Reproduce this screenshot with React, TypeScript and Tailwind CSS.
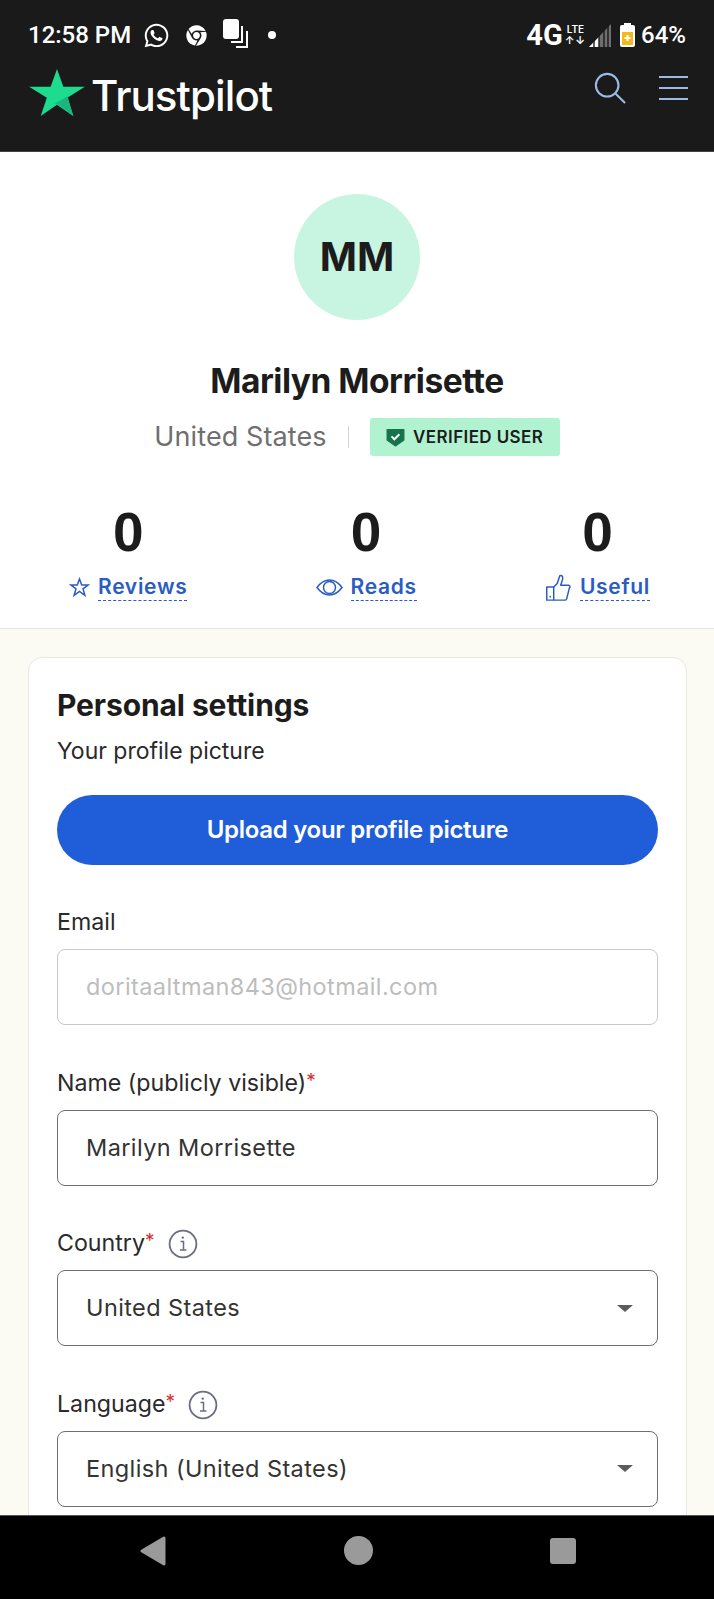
import { FaChrome, FaWhatsapp } from "react-icons/fa";

const Field = ({ label, required, info, value, muted, select, className }: { label: string; required?: boolean; info?: boolean; value: string; muted?: boolean; select?: boolean; className: string }) => {
  return (
    <div className={className}>
      <div className="flex items-center h-[26px] text-[23.2px] text-[#2a2a2a] leading-none">
        <span>{label}</span>
        {required && <span className="text-[#d32f2f] text-[19px] self-start">*</span>}
        {info && (
          <svg className="ml-[13px]" width="30" height="30" viewBox="0 0 30 30" fill="none" stroke="#6a6d80" strokeWidth="1.8">
            <circle cx="15" cy="15" r="13.4" />
            <path d="M12.5 12.6h3v8M12 21h6.4" strokeWidth="1.5" />
            <circle cx="14.8" cy="8.6" r="1.2" fill="#6a6d80" stroke="none" />
          </svg>
        )}
      </div>
      <div className={`mt-[13px] h-[76px] rounded-[8px] border flex items-center justify-between pl-[28px] pr-[24px] text-[23.5px] tracking-[0.4px] ${muted ? "border-[#c9c9c9] text-[#bdbdbd]" : "border-[#6f6f6f] text-[#333]"}`}>
        <span>{value}</span>
        {select && <span className="w-0 h-0 border-x-[8px] border-x-transparent border-t-[7px] border-t-[#5c5c5c]" />}
      </div>
    </div>
  );
};

const Stat = ({ icon, label }: { icon: React.ReactNode; label: string }) => {
  return (
    <div className="flex flex-col items-center">
      <div className="text-[55px] font-bold leading-none text-[#1c1c1c] font-['Liberation_Sans',sans-serif]">0</div>
      <div className="mt-[14px] h-[27px] flex items-center gap-[8px]">
        {icon}
        <span className="text-[21px] font-semibold tracking-[0.7px] leading-[26px] text-[#2a5cc4] border-b border-dashed border-[#2a5cc4]">{label}</span>
      </div>
    </div>
  );
};

export default function App() {
  return (
    <div className="w-[714px] h-[1599px] flex flex-col overflow-hidden bg-white font-['Inter',sans-serif]">
      {/* app bar with the phone status line */}
      <header className="h-[152px] shrink-0 bg-[#1a1a1a] text-white border-b border-[#444] px-[28px] pt-[20px]">
        <div className="flex items-center justify-between h-[30px]">
          <div className="flex items-center">
            <span className="text-[24px] font-medium font-['Roboto',sans-serif] leading-none">12:58 PM</span>
            <FaWhatsapp className="ml-[12px]" size={27} />
            <FaChrome className="ml-[16px]" size={21} />
            <svg className="ml-[14px] -mt-[3px]" width="28" height="32" viewBox="0 0 28 32" fill="#fff">
              <rect x="2" y="1" width="16" height="20" rx="3" />
              <path d="M20 8v15h-10v2h12V8zM25 13v15h-10v2h12V13z" />
            </svg>
            <span className="ml-[19px] w-[8px] h-[8px] rounded-full bg-white" />
          </div>
          <div className="flex items-center">
            <span className="text-[29px] font-bold font-['Roboto',sans-serif] leading-none">4G</span>
            <div className="ml-[2px] flex flex-col items-center">
              <span className="text-[10px] font-semibold leading-[11px]">LTE</span>
              <span className="text-[11px] font-semibold leading-[11px] tracking-[1px]">↑↓</span>
            </div>
            <svg className="ml-[2px]" width="24" height="24" viewBox="0 0 24 24">
              <path d="M1 24L23 1v23z" fill="#6e6e6e" />
              <path d="M1 24l10-10v10z" fill="#fff" />
              <path d="M6 8v16M11 8v16M16 0v24M20 0v24" stroke="#1a1a1a" strokeWidth="1.4" />
            </svg>
            <svg className="ml-[8px]" width="15" height="24" viewBox="0 0 15 24">
              <rect x="4" y="0" width="7" height="3" fill="#fff" />
              <rect x="0" y="2" width="15" height="22" rx="2" fill="#fff" />
              <rect x="2" y="9" width="11" height="13" fill="#f5b81c" />
              <path d="M6.5 12h2v2h2v2h-2v2h-2v-2h-2v-2h2z" fill="#fff" />
            </svg>
            <span className="ml-[6px] text-[24px] font-medium font-['Roboto',sans-serif] leading-none">64%</span>
          </div>
        </div>
        <div className="mt-[17px] flex items-start justify-between">
          <div className="flex items-center">
            <svg width="58" height="47" viewBox="0 0 58 49">
              <path d="M29 0l6.6 18.6H58L39.8 30 46 49 29 37.2 12 49l6.4-19L0 18.6h22.4z" fill="#1ddb8f" />
              <path d="M27 36l13-7.5L46 49 29 37.2z" fill="#19b67f" />
            </svg>
            <span className="ml-[5px] mt-[8px] text-[42px] font-medium tracking-[-0.9px] leading-none">Trustpilot</span>
          </div>
          <div className="flex items-center mt-[5px] text-[#9db9e6]">
            <svg className="mr-[1px]" width="32" height="32" viewBox="0 0 34 34" fill="none" stroke="currentColor" strokeWidth="2.2">
              <circle cx="14" cy="14" r="12" />
              <path d="M23 23l10 10" />
            </svg>
            <div className="ml-[32px] mr-[-2px] w-[29px] flex flex-col gap-[9px]">
              <span className="h-[2px] bg-[#9db9e6]" />
              <span className="h-[2px] bg-[#9db9e6]" />
              <span className="h-[2px] bg-[#9db9e6]" />
            </div>
          </div>
        </div>
      </header>

      <main className="flex-1 min-h-0 overflow-hidden bg-[#fbfaf3]">
        {/* profile block */}
        <section className="h-[477px] bg-white border-b border-[#e6e6e2] flex flex-col items-center pt-[42px]">
          <div className="w-[126px] h-[126px] rounded-full bg-[#c8f5e2] flex items-center justify-center text-[40px] font-bold text-[#1c1c1c]">MM</div>
          <h1 className="mt-[41px] text-[33.5px] font-bold tracking-[-0.5px] leading-[40px] text-[#1c1c1c]">Marilyn Morrisette</h1>
          <div className="mt-[16px] flex items-center">
            <span className="text-[27px] text-[#6f6f6f] tracking-[0.1px]">United States</span>
            <span className="ml-[21px] w-px h-[22px] bg-[#d5d5d5]" />
            <div className="ml-[21px] w-[190px] h-[38px] rounded-[3px] bg-[#b1f3d0] flex items-center justify-center gap-[8px]">
              <svg width="19" height="19" viewBox="0 0 18 18">
                <path d="M1 1.5h16v10L9 17l-8-5.5z" fill="#17734b" stroke="#17734b" strokeLinejoin="round" />
                <path d="M5.2 8l2.7 2.7 4.8-4.8" fill="none" stroke="#fff" strokeWidth="1.8" />
              </svg>
              <span className="text-[17px] font-semibold tracking-[0.4px] text-[#1c1c1c] whitespace-nowrap">VERIFIED USER</span>
            </div>
          </div>
          <div className="mt-[47px] self-stretch flex justify-between pl-[69px] pr-[64px]">
            <Stat
              label="Reviews"
              icon={
                <svg width="21" height="21" viewBox="0 0 21 21" fill="none" stroke="#2a5cc4" strokeWidth="1.5">
                  <path d="M10.5 2l2.2 6h6.3l-5 3.8 1.9 6.5-5.4-3.9-5.4 3.9 1.9-6.5L2 8h6.3z" />
                </svg>
              }
            />
            <Stat
              label="Reads"
              icon={
                <svg width="27" height="21" viewBox="0 0 27 21" fill="none" stroke="#2a5cc4" strokeWidth="1.5">
                  <path d="M1 10.5C5 5 9 3 13.5 3S22 5 26 10.5C22 16 18 18 13.5 18S5 16 1 10.5z" />
                  <circle cx="13.5" cy="10.5" r="6" />
                </svg>
              }
            />
            <Stat
              label="Useful"
              icon={
                <svg width="27" height="27" viewBox="0 0 29 31" fill="none" stroke="#2a5cc4" strokeWidth="1.7" strokeLinejoin="round">
                  <path d="M1 15h8v15H1z" />
                  <path d="M9 15l4-4 3-9c3-1 4 2 3 5l-2 6h9c2 0 2 2 1 3l-3 12c0 1-1 2-2 2H9" />
                  <circle cx="5" cy="26" r="1" fill="#2a5cc4" stroke="none" />
                </svg>
              }
            />
          </div>
        </section>

        {/* settings card, cut off by the nav bar */}
        <section className="mt-[28px] ml-[28px] mr-[27px] h-[900px] rounded-[14px] border border-[#e9e9e4] bg-white px-[28px] pt-[28px]">
          <h2 className="text-[30px] font-bold tracking-[-0.1px] leading-[38px] text-[#1c1c1c]">Personal settings</h2>
          <p className="mt-[12px] text-[23px] leading-[30px] text-[#2a2a2a]">Your profile picture</p>
          <div className="mt-[29px] h-[70px] rounded-full bg-[#1f5ed8] flex items-center justify-center text-[24px] font-semibold tracking-[-0.3px] text-white">Upload your profile picture</div>
          <Field className="mt-[45px]" label="Email" value="doritaaltman843@hotmail.com" muted />
          <Field className="mt-[45.5px]" label="Name (publicly visible)" required value="Marilyn Morrisette" />
          <Field className="mt-[45.5px]" label="Country" required info value="United States" select />
          <Field className="mt-[45.5px]" label="Language" required info value="English (United States)" select />
        </section>
      </main>

      {/* phone nav bar */}
      <nav className="h-[84px] shrink-0 bg-black border-t border-[#555] flex items-center justify-center">
        <div className="flex items-center gap-[177px] -mt-[14px]">
          <svg width="28" height="30" viewBox="0 0 28 30">
            <path d="M25 2L3 15l22 13z" fill="#9a9a9a" stroke="#9a9a9a" strokeWidth="3" strokeLinejoin="round" />
          </svg>
          <span className="w-[29px] h-[29px] rounded-full bg-[#9a9a9a]" />
          <span className="w-[26px] h-[26px] rounded-[3px] bg-[#9a9a9a]" />
        </div>
      </nav>
    </div>
  );
}
